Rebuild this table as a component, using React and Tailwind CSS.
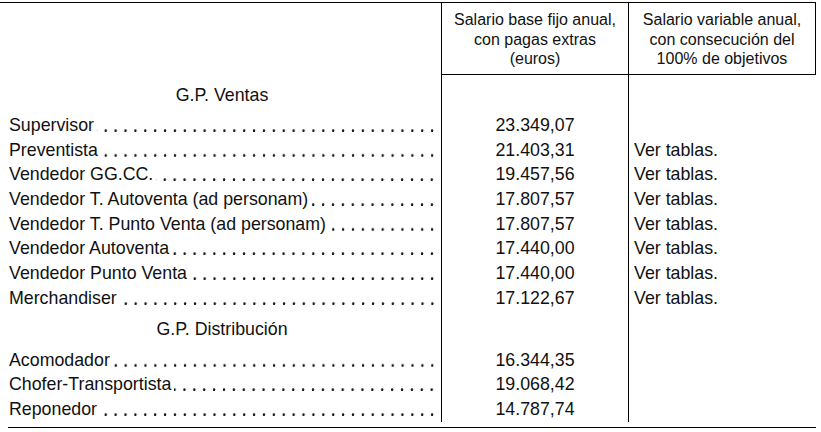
const VENTAS = [
  ["Supervisor", "23.349,07", ""],
  ["Preventista", "21.403,31", "Ver tablas."],
  ["Vendedor GG.CC.", "19.457,56", "Ver tablas."],
  ["Vendedor T. Autoventa (ad personam)", "17.807,57", "Ver tablas."],
  ["Vendedor T. Punto Venta (ad personam)", "17.807,57", "Ver tablas."],
  ["Vendedor Autoventa", "17.440,00", "Ver tablas."],
  ["Vendedor Punto Venta", "17.440,00", "Ver tablas."],
  ["Merchandiser", "17.122,67", "Ver tablas."],
];

const DISTRIBUCION = [
  ["Acomodador", "16.344,35", ""],
  ["Chofer-Transportista", "19.068,42", ""],
  ["Reponedor", "14.787,74", ""],
];

function Row({ label, base, variable }) {
  return (
    <div className="flex h-[24.7px] leading-[24.7px]">
      <div className="flex w-[433px] pl-px pr-[4px]">
        <span className="shrink-0 whitespace-nowrap">{label}</span>
        {/* dot leaders, aligned on the right edge of the column */}
        <span className="ml-[3px] flex-1 bg-[radial-gradient(circle_at_5px_17.4px,#1a1a1a_1px,transparent_1.6px)] bg-[length:9.9px_24.7px] bg-right bg-repeat-x" />
      </div>
      <div className="w-[187px] border-l border-black text-center">{base}</div>
      <div className="flex-1 border-l border-black pl-[5px]">{variable}</div>
    </div>
  );
}

function Section({ title, height, top }) {
  return (
    <div className={`flex leading-[24.7px] ${height}`}>
      <div className={`w-[433px] pr-[5px] text-center ${top}`}>{title}</div>
      <div className="w-[187px] border-l border-black" />
      <div className="flex-1 border-l border-black" />
    </div>
  );
}

export default function App() {
  return (
    <div
      className="h-[432px] w-[821px] overflow-hidden bg-white text-[#111]"
      style={{ fontFamily: '"Liberation Sans", Arial, sans-serif' }}
    >
      <div className="mt-[2px] w-[816px] border-t border-black">
        {/* Header */}
        <div className="flex h-[72px] text-[16px] leading-[19.5px]">
          <div className="w-[441px]" />
          <div className="w-[187px] border-b border-l border-black pt-[7px] text-center">
            Salario base fijo anual,
            <br />
            con pagas extras
            <br />
            (euros)
          </div>
          <div className="flex-1 border-b border-l border-r border-black pt-[7px] text-center">
            Salario variable anual,
            <br />
            con consecución del
            <br />
            100% de objetivos
          </div>
        </div>

        {/* Body */}
        <div className="ml-[8px] border-b border-black pb-[5px] text-[17.8px]">
          <Section title="G.P. Ventas" height="h-[38px]" top="pt-[8px]" />
          {VENTAS.map(([label, base, variable]) => (
            <Row key={label} label={label} base={base} variable={variable} />
          ))}
          <Section title="G.P. Distribución" height="h-[37px]" top="pt-[6px]" />
          {DISTRIBUCION.map(([label, base, variable]) => (
            <Row key={label} label={label} base={base} variable={variable} />
          ))}
        </div>
      </div>
    </div>
  );
}
